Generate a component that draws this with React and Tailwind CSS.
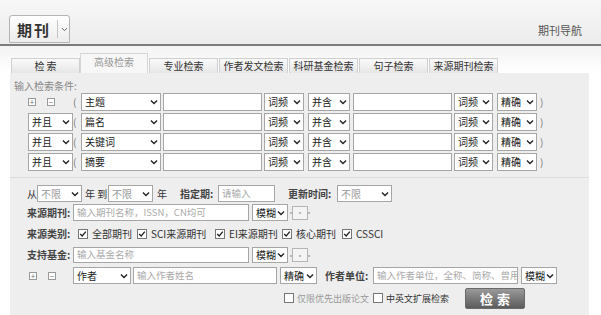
import React from "react";

function Chevron() {
  return (
    <svg viewBox="0 0 10 10" className="w-[8px] h-[8px] shrink-0">
      <path d="M1.2 3 L5 6.8 L8.8 3" fill="none" stroke="#222" strokeWidth="1.7" />
    </svg>
  );
}

function Select({ label, w, light = false }) {
  return (
    <div
      className={`${w} h-full flex items-center justify-between bg-white border border-[#a6a6a6] pl-[3px] pr-[2px] shrink-0 text-[10px]`}
    >
      <span className={light ? "text-[#999]" : "text-[#222]"}>{label}</span>
      <Chevron />
    </div>
  );
}

function Input({ w, ph = "" }) {
  return (
    <div className={`${w} h-full bg-white border border-[#a6a6a6] pl-[3px] flex items-center text-[#aaa] text-[9.5px] shrink-0 overflow-hidden`}>
      {ph}
    </div>
  );
}

function PlusMinus() {
  return (
    <div className="flex items-center gap-[11px]">
      <span className="w-[8px] h-[8px] border border-[#9a9a9a] bg-white flex items-center justify-center text-[8px] leading-none text-[#777]">+</span>
      <span className="w-[8px] h-[8px] border border-[#9a9a9a] bg-white flex items-center justify-center text-[8px] leading-none text-[#777]">−</span>
    </div>
  );
}

function Check({ on = true }) {
  return (
    <span className="w-[10px] h-[10px] border border-[#777] bg-white flex items-center justify-center shrink-0">
      {on && (
        <svg viewBox="0 0 10 10" className="w-[8px] h-[8px]">
          <path d="M1.5 5 L4 7.5 L8.5 2" fill="none" stroke="#222" strokeWidth="1.6" />
        </svg>
      )}
    </span>
  );
}

function Dots() {
  return (
    <div className="w-[16px] h-[14px] border border-[#b5b5b5] bg-[#f4f4f4] flex items-center justify-center text-[#aaa] text-[9px] leading-none shrink-0">
      ···
    </div>
  );
}

const tabs = ["检 索", "高级检索", "专业检索", "作者发文检索", "科研基金检索", "句子检索", "来源期刊检索"];

const rows = [
  { field: "主题", first: true },
  { field: "篇名" },
  { field: "关键词" },
  { field: "摘要" },
];

const label = "font-bold text-[#444] shrink-0";

export default function App() {
  return (
    <div
      className="w-[601px] h-[315px] overflow-hidden bg-white text-[10px] text-[#333] leading-none whitespace-nowrap"
      style={{ fontFamily: '"Noto Sans CJK SC", "Liberation Sans", sans-serif' }}
    >
      {/* header */}
      <div className="h-[46px] bg-gradient-to-b from-[#f7f7f7] to-[#ececec] border-b-2 border-[#7b7b7b] flex items-end justify-between pl-[9px] pr-[19px]">
        <div className="w-[61px] h-[28px] mb-[1px] rounded-t-[3px] border border-[#b4b4b4] bg-gradient-to-b from-white to-[#ececec] flex items-center pl-[7px]">
          <span className="text-[15px] font-bold text-[#333] tracking-[2px]">期刊</span>
          <span className="ml-[6px] w-px h-[18px] bg-[#c4c4c4]" />
          <svg viewBox="0 0 10 10" className="w-[7px] h-[7px] ml-[3px]">
            <path d="M1.5 3 L5 6.8 L8.5 3" fill="none" stroke="#666" strokeWidth="1.4" />
          </svg>
        </div>
        <span className="mb-[8px] text-[11px] text-[#555]">期刊导航</span>
      </div>

      {/* tabs */}
      <div className="h-[27px] pl-[10px] flex items-end bg-gradient-to-b from-[#f3f3f3] to-white">
        {tabs.map((t, i) =>
          i === 1 ? (
            <div key={t} className="w-[68px] h-[20px] bg-[#f7f7f7] border border-b-0 border-[#d5d5d5] flex items-start justify-center pt-[3px] text-[10px] text-[#999]">
              {t}
            </div>
          ) : (
            <div key={t} className="w-[69px] h-[15px] ml-px bg-gradient-to-b from-[#fafafa] to-[#e6e6e6] border border-b-0 border-[#d0d0d0] flex items-center justify-center text-[10px] text-[#333]">
              {t}
            </div>
          )
        )}
      </div>

      {/* panel */}
      <div className="ml-[10px] w-[579px] h-[242px] bg-[#eeeeee]">
        <div className="pl-[4px] pt-[8px] h-[20px] text-[10px] text-[#888]">输入检索条件:</div>

        <div className="flex flex-col gap-[2px]">
          {rows.map((r) => (
            <div key={r.field} className="h-[18px] flex items-center">
              <div className="w-[63px] pl-[18px] h-full flex items-center shrink-0">
                {r.first ? <PlusMinus /> : <Select label="并且" w="w-[45px]" />}
              </div>
              <span className="w-[8px] text-[#777]">(</span>
              <Select label={r.field} w="w-[80px]" />
              <div className="ml-[2px] h-full"><Input w="w-[99px]" /></div>
              <div className="ml-[2px] h-full"><Select label="词频" w="w-[40px]" /></div>
              <div className="ml-[4px] h-full"><Select label="并含" w="w-[42px]" /></div>
              <div className="ml-[3px] h-full"><Input w="w-[99px]" /></div>
              <div className="ml-[2px] h-full"><Select label="词频" w="w-[39px]" /></div>
              <div className="ml-[4px] h-full"><Select label="精确" w="w-[40px]" /></div>
              <span className="ml-[3px] text-[#777]">)</span>
            </div>
          ))}
        </div>

        <div className="mt-[6px] border-t border-[#dddddd]" />

        {/* lower section */}
        <div className="pl-[17px] pt-[7px] flex flex-col">
          <div className="h-[17px] flex items-center">
            <span className="w-[10px] shrink-0">从</span>
            <Select label="不限" w="w-[45px]" light />
            <span className="ml-[3px] w-[23px] shrink-0">年 到</span>
            <Select label="不限" w="w-[45px]" light />
            <span className="ml-[4px] w-[23px] shrink-0">年</span>
            <span className={`${label} w-[38px]`}>指定期:</span>
            <Input w="w-[57px]" ph="请输入" />
            <span className={`${label} ml-[13px] w-[49px]`}>更新时间:</span>
            <Select label="不限" w="w-[55px]" light />
          </div>

          <div className="h-[17px] mt-[2px] flex items-center">
            <span className={`${label} w-[46px]`}>来源期刊:</span>
            <Input w="w-[176px]" ph="输入期刊名称，ISSN，CN均可" />
            <div className="ml-[3px] h-full"><Select label="模糊" w="w-[36px]" /></div>
            <div className="ml-[4px]"><Dots /></div>
          </div>

          <div className="h-[17px] mt-[4px] flex items-center">
            <span className={`${label} w-[51px]`}>来源类别:</span>
            <Check />
            <span className="ml-[4px] w-[45px] shrink-0">全部期刊</span>
            <Check />
            <span className="ml-[4px] w-[64px] shrink-0">SCI来源期刊</span>
            <Check />
            <span className="ml-[4px] w-[53px] shrink-0">EI来源期刊</span>
            <Check />
            <span className="ml-[4px] w-[46px] shrink-0">核心期刊</span>
            <Check />
            <span className="ml-[4px]">CSSCI</span>
          </div>

          <div className="h-[16px] mt-[5px] flex items-center">
            <span className={`${label} w-[46px]`}>支持基金:</span>
            <Input w="w-[176px]" ph="输入基金名称" />
            <div className="ml-[3px] h-full"><Select label="模糊" w="w-[36px]" /></div>
            <div className="ml-[4px]"><Dots /></div>
          </div>

          <div className="h-[17px] mt-[4px] flex items-center">
            <div className="w-[46px] pl-[2px] h-full flex items-center shrink-0"><PlusMinus /></div>
            <Select label="作者" w="w-[58px]" />
            <div className="ml-[2px] h-full"><Input w="w-[144px]" ph="输入作者姓名" /></div>
            <div className="ml-[3px] h-full"><Select label="精确" w="w-[37px]" /></div>
            <span className={`${label} ml-[8px] w-[48px]`}>作者单位:</span>
            <Input w="w-[145px]" ph="输入作者单位，全称、简称、曾用名均可" />
            <div className="ml-[3px] h-full"><Select label="模糊" w="w-[36px]" /></div>
          </div>

          <div className="h-[22px] mt-[3px] flex items-center">
            <div className="ml-[257px]"><Check on={false} /></div>
            <span className="ml-[3px] w-[76px] shrink-0 text-[#999] text-[9px]">仅限优先出版论文</span>
            <Check on={false} />
            <span className="ml-[3px] w-[76px] shrink-0 text-[9px]">中英文扩展检索</span>
            <button className="ml-[3px] w-[60px] h-[21px] rounded-[2px] bg-gradient-to-b from-[#9a9a9a] to-[#5c5c5c] border border-[#6a6a6a] text-white text-[13px] font-bold tracking-[4px] flex items-center justify-center pl-[4px]">
              检索
            </button>
          </div>
        </div>
      </div>
    </div>
  );
}
